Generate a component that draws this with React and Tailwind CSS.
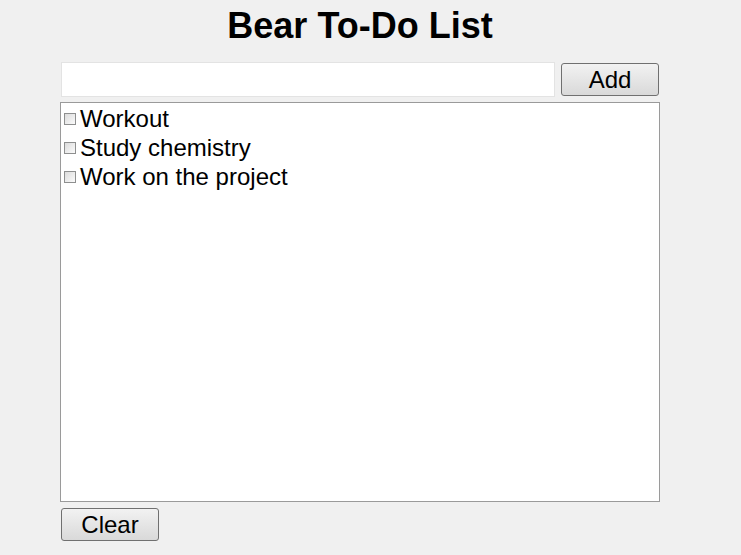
import React, { useState } from "react";

const font = { fontFamily: '"Liberation Sans", Arial, sans-serif' };

const Box = () => (
  <span className="inline-block w-[12px] h-[12px] ml-[3px] mr-[4px] border border-[#8e8f8f] bg-gradient-to-br from-[#dcdcdc] to-[#fbfbfb] shrink-0" />
);

export default function App() {
  const [items] = useState(["Workout", "Study chemistry", "Work on the project"]);

  return (
    <div className="min-h-[555px] bg-[#f0f0f0] text-black" style={font}>
      <div className="ml-[60px] w-[600px]">
        <h1 className="text-center text-[36px] font-bold leading-none pt-[8px] pb-[18px]">Bear To-Do List</h1>
        <div className="flex items-center gap-[6px]">
          <input className="w-[494px] h-[35px] bg-white border border-[#e3e3e3] ml-[1px] outline-none px-1 text-[20px]" />
          <button className="w-[98px] h-[33px] border border-[#707070] rounded-[3px] bg-gradient-to-b from-[#f2f2f2] to-[#d9d9d9] text-[24px] leading-none">Add</button>
        </div>
        <div className="mt-[5px] h-[400px] border border-[#9a9a9a] bg-white pt-[1px]">
          {items.map((t) => (
            <div key={t} className="flex items-center h-[29px] text-[24px] leading-none">
              <Box />
              <span>{t}</span>
            </div>
          ))}
        </div>
        <button className="mt-[6px] ml-[1px] w-[98px] h-[33px] border border-[#707070] rounded-[3px] bg-gradient-to-b from-[#f2f2f2] to-[#d9d9d9] text-[24px] leading-none">Clear</button>
      </div>
    </div>
  );
}
